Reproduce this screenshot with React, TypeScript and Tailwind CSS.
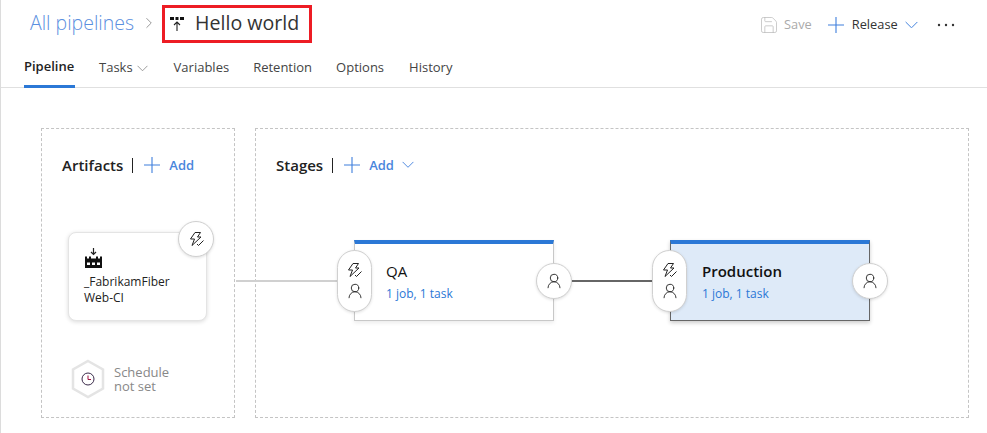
import React from 'react';
import { ChevronRight, Save, UserRound } from 'lucide-react';

const font = 'font-["Open_Sans","Noto_Sans",sans-serif]';

const PlusGlyph = ({ size = 16, className }: { size?: number; className?: string }) => (
  <svg width={size} height={size} viewBox="0 0 16 16" className={className}>
    <path d="M0 8h16M8 0v16" stroke="#3f7fdc" strokeWidth="1.1" fill="none" />
  </svg>
);

const ChevronGlyph = ({ width = 13, color = '#3f7fdc', className }: { width?: number; color?: string; className?: string }) => (
  <svg width={width} height={width * 0.6} viewBox="0 0 13 8" className={className}>
    <path d="M0.500 1l6 6 6-6" stroke={color} strokeWidth="1" fill="none" />
  </svg>
);

const TriggerIcon = () => (
  <svg width="17" height="17" viewBox="0 0 17 17" fill="none" stroke="#222" strokeWidth="1">
    <path d="M7 1.500h5.500L9.500 6h3.500L4 14.500 6.500 8H2.500z" />
    <path d="M9 13l1.500 1.500L15.500 9.500" />
  </svg>
);

const BuildIcon = () => (
  <svg width="19" height="20" viewBox="0 0 19 20">
    <path d="M9.500 0v6M7 4l2.500 2.500L12 4" fill="none" stroke="#222" strokeWidth="1.200" />
    <path d="M1 20V8.500h2v2h2v-2h2v2h5v-2h2v2h2v-2h2V20z" fill="#111" />
    <path d="M3 14.500h3v2.500H3zM8 14.500h3v2.500H8zM13 14.500h3v2.500h-3z" fill="#fff" />
  </svg>
);

const ReleaseIcon = () => (
  <svg width="16" height="16" viewBox="0 0 16 16">
    <path d="M1 1h4v3H1zM6.500 1h3v3h-3zM11 1h4v3h-4z" fill="#111" />
    <path d="M8 15V6M5 9l3-3 3 3" fill="none" stroke="#222" strokeWidth="1.100" />
  </svg>
);

const Person = () => <UserRound size={18} strokeWidth={1.2} color="#222" />;

const Circle = ({ className, children }: { className: string; children: React.ReactNode }) => (
  <div className={`absolute w-[36px] h-[36px] rounded-full bg-white border border-[#d0d0d0] shadow-[0_1px_3px_rgba(0,0,0,0.12)] flex items-center justify-center ${className}`}>
    {children}
  </div>
);

const Pill = ({ className }: { className: string }) => (
  <div className={`absolute w-[35px] h-[62px] rounded-full bg-white border border-[#d0d0d0] shadow-[0_1px_3px_rgba(0,0,0,0.12)] flex flex-col items-center justify-center gap-[3px] ${className}`}>
    <TriggerIcon />
    <Person />
  </div>
);

const StageCard = ({ name, active, className }: { name: string; active?: boolean; className: string }) => (
  <div className={`absolute w-[200px] h-[81px] border-t-4 border-t-[#2b78d6] pl-[31px] pt-[16px] ${active ? 'bg-[#deeaf8] border-x border-b border-x-[#666] border-b-[#666] shadow-[0_2px_4px_rgba(0,0,0,0.2)]' : 'bg-white border-x border-b border-x-[#c8c8c8] border-b-[#c8c8c8] shadow-[0_2px_4px_rgba(0,0,0,0.08)]'} ${className}`}>
    <div className={`text-[15px] leading-[22px] text-[#111] ${active ? 'font-semibold' : ''}`}>{name}</div>
    <div className="text-[12px] leading-[20px] mt-[2px] text-[#2b78d6]">1 job, 1 task</div>
  </div>
);

const App: React.FC = () => {
  return (
    <div className={`w-[987px] h-[433px] overflow-hidden bg-white border-l border-[#dcdcdc] ${font}`}>
      <div className="h-[46px] flex items-center pl-[29px]">
        <span className="text-[19.500px] text-[#5b8fe0] font-light">All pipelines</span>
        <ChevronRight size={18} strokeWidth={1} color="#777" className="ml-[6px]" />
        <div className="ml-[4px] h-[38px] mt-[2px] w-[150px] border-[3px] border-[#ed1c24] flex items-center pl-[4px]">
          <ReleaseIcon />
          <span className="ml-[10px] -mt-[2px] text-[19.600px] text-[#333]">Hello world</span>
        </div>
        <div className="ml-[447px] mt-[3px] flex items-center text-[12.800px]">
          <Save size={20} strokeWidth={0.9} color="#bbb" />
          <span className="ml-[5px] text-[#aaa]">Save</span>
          <PlusGlyph className="ml-[16px]" />
          <span className="ml-[8px] text-[#333]">Release</span>
          <ChevronGlyph className="ml-[7px]" />
          <svg width="18" height="4" viewBox="0 0 18 4" className="ml-[19px]">
            <circle cx="2" cy="2" r="1.200" fill="#333" />
            <circle cx="9" cy="2" r="1.200" fill="#333" />
            <circle cx="16" cy="2" r="1.200" fill="#333" />
          </svg>
        </div>
      </div>
      <div className="h-[42px] border-b border-[#e0e0e0] flex items-stretch pl-[23px] text-[13px] text-[#444]">
        <div className="flex items-center pt-[3px] font-semibold text-[#222] w-[51px] border-b-[3px] border-[#2b78d6] -mb-px whitespace-nowrap">Pipeline</div>
        <div className="flex items-center pt-[3px] ml-[24px]">Tasks<ChevronGlyph width={11} color="#888" className="ml-[4px]" /></div>
        <div className="flex items-center pt-[3px] ml-[26px]">Variables</div>
        <div className="flex items-center pt-[3px] ml-[24px]">Retention</div>
        <div className="flex items-center pt-[3px] ml-[24px]">Options</div>
        <div className="flex items-center pt-[3px] ml-[25px]">History</div>
      </div>
      <div className="flex gap-[20px] pl-[40px] pt-[40px]">
        <div className="relative w-[194px] h-[290px] border border-dashed border-[#c4c4c4]">
          <div className="flex items-center mt-[26px] ml-[20px] h-[20px]">
            <span className="text-[15px] -mt-[1px] font-semibold text-[#222] leading-[20px]">Artifacts</span>
            <span className="ml-[9px] w-px h-[15px] bg-[#222]" />
            <PlusGlyph className="ml-[11px]" />
            <span className="ml-[9px] mt-[1px] text-[13px] font-semibold text-[#4a86dc]">Add</span>
          </div>
          <div className="absolute left-[26px] top-[103px] w-[139px] h-[89px] rounded-[8px] bg-white border border-[#e4e4e4] shadow-[0_1px_4px_rgba(0,0,0,0.15)] pl-[15px] pt-[15px]">
            <BuildIcon />
            <div className="text-[12px] leading-[16px] mt-[6px] text-[#222]">_FabrikamFiber<br />Web-CI</div>
          </div>
          <Circle className="left-[136px] top-[92px]"><TriggerIcon /></Circle>
          <div className="absolute left-[28px] top-[230px] flex items-center">
            <svg width="36" height="40" viewBox="0 0 36 40">
              <path d="M18 2l15 8.500v19L18 38 3 29.500v-19z" fill="#fff" stroke="#e4e4e4" strokeWidth="2.500" />
              <circle cx="18" cy="20" r="6" fill="none" stroke="#3a2a4a" strokeWidth="1" />
              <path d="M18 16.500V20.500h3" fill="none" stroke="#a01040" strokeWidth="1" />
            </svg>
            <div className="ml-[8px] -mt-[1px] text-[13px] leading-[14px] text-[#888]">
              <div>Schedule</div>
              <div>not set</div>
            </div>
          </div>
        </div>
        <div className="relative w-[714px] h-[290px] border border-dashed border-[#c4c4c4]">
          <div className="flex items-center mt-[26px] ml-[20px] h-[20px]">
            <span className="text-[15px] -mt-[1px] font-semibold text-[#222] leading-[20px]">Stages</span>
            <span className="ml-[9px] w-px h-[15px] bg-[#222]" />
            <PlusGlyph className="ml-[11px]" />
            <span className="ml-[9px] mt-[1px] text-[13px] font-semibold text-[#4a86dc]">Add</span>
            <ChevronGlyph width={12} className="ml-[8px]" />
          </div>
          <div className="absolute left-[-20px] top-[151px] w-[102px] h-[2px] bg-[#d0d0d0]" />
          <StageCard name="QA" className="left-[98px] top-[111px]" />
          <Pill className="left-[81px] top-[121px]" />
          <Circle className="left-[280px] top-[134px]"><Person /></Circle>
          <div className="absolute left-[316px] top-[151px] w-[82px] h-[2px] bg-[#666]" />
          <StageCard name="Production" active className="left-[414px] top-[111px]" />
          <Pill className="left-[396px] top-[121px]" />
          <Circle className="left-[596px] top-[134px]"><Person /></Circle>
        </div>
      </div>
    </div>
  );
};

export default App;
